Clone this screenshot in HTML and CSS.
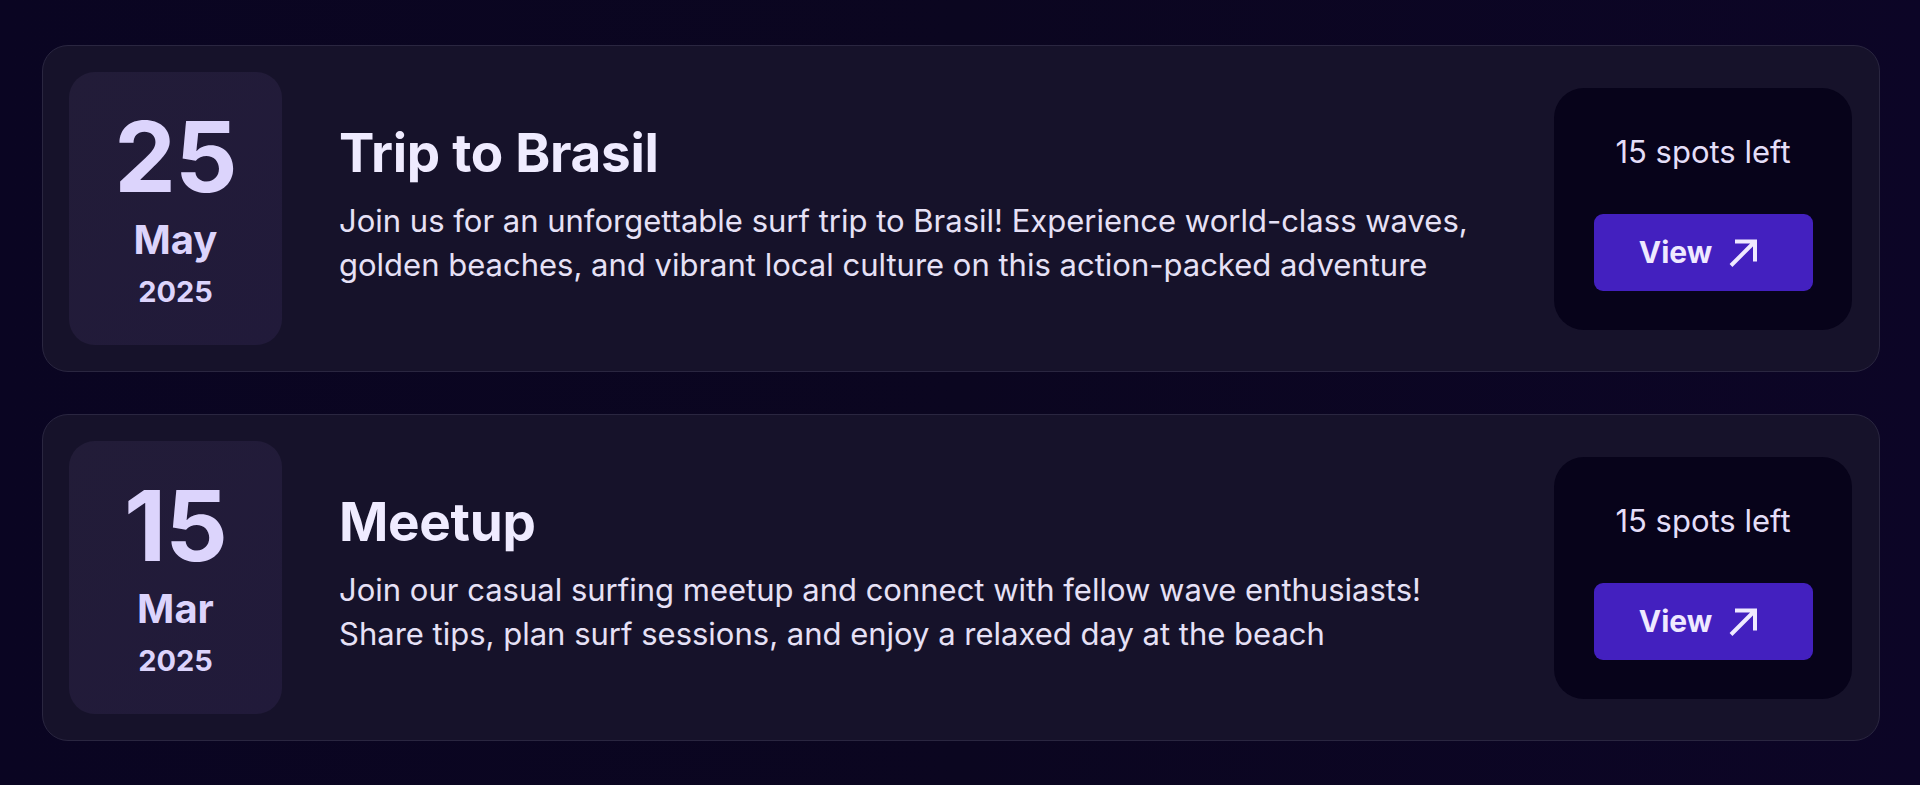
FILE: index.html
```html
<!DOCTYPE html>
<html lang="en">
<head>
<meta charset="utf-8">
<title>Events</title>
<link rel="stylesheet" href="styles.css">
</head>
<body>
<main class="events">
  <article class="event-card">
    <div class="date-box">
      <div class="date-day">25</div>
      <div class="date-month">May</div>
      <div class="date-year">2025</div>
    </div>
    <div class="event-info">
      <h2 class="event-title">Trip to Brasil</h2>
      <p class="event-desc">Join us for an unforgettable surf trip to Brasil! Experience world-class waves,<br>golden beaches, and vibrant local culture on this action-packed adventure</p>
    </div>
    <div class="event-action">
      <div class="spots">15 spots left</div>
      <a class="view-btn" href="#">View
        <svg class="arrow" viewBox="0 0 31 31" width="31" height="31" aria-hidden="true"><path d="M3 28.5 L27 4.5 M7 4.5 H27 V24.5" fill="none" stroke="currentColor" stroke-width="4"/></svg>
      </a>
    </div>
  </article>
  <article class="event-card">
    <div class="date-box">
      <div class="date-day">15</div>
      <div class="date-month">Mar</div>
      <div class="date-year">2025</div>
    </div>
    <div class="event-info">
      <h2 class="event-title">Meetup</h2>
      <p class="event-desc">Join our casual surfing meetup and connect with fellow wave enthusiasts!<br>Share tips, plan surf sessions, and enjoy a relaxed day at the beach</p>
    </div>
    <div class="event-action">
      <div class="spots">15 spots left</div>
      <a class="view-btn" href="#">View
        <svg class="arrow" viewBox="0 0 31 31" width="31" height="31" aria-hidden="true"><path d="M3 28.5 L27 4.5 M7 4.5 H27 V24.5" fill="none" stroke="currentColor" stroke-width="4"/></svg>
      </a>
    </div>
  </article>
</main>
</body>
</html>
```
FILE: styles.css
```css
* { box-sizing: border-box; }
html, body { margin: 0; height: 100%; }
body {
  background: linear-gradient(90deg, #0a0522 0%, #0b0620 50%, #0c0526 100%);
  font-family: Inter, "Noto Sans", sans-serif;
  color: #ece8fb;
}
.events {
  display: flex;
  flex-direction: column;
  gap: 42px;
  padding: 45px 40px 0 42px;
}
.event-card {
  display: flex;
  align-items: center;
  padding: 26px;
  border: 1px solid #2a2640;
  border-radius: 26px;
  background: #16122a;
}
.date-box {
  flex: 0 0 213px;
  height: 273px;
  padding-top: 5px;
  border-radius: 26px;
  background: linear-gradient(135deg, #221c38 0%, #211a3a 100%);
  display: flex;
  flex-direction: column;
  align-items: center;
  justify-content: center;
  color: #dcd4fc;
  font-weight: 700;
}
.date-day { font-size: 98px; line-height: 1; letter-spacing: -1px; margin-top: -4px; }
.date-month { font-size: 40px; line-height: 1.2; margin-top: 10px; }
.date-year { font-size: 29px; line-height: 1.2; margin-top: 11px; }
.event-info {
  flex: 1;
  padding-left: 57px;
  padding-bottom: 8px;
}
.event-title {
  margin: 0;
  font-size: 53px;
  font-weight: 700;
  line-height: 1.2;
  color: #efebff;
  letter-spacing: -0.3px;
}
.event-desc {
  margin: 13px 0 0;
  font-size: 31px;
  line-height: 44px;
  color: #e6e1f6;
}
.event-action {
  flex: 0 0 298px;
  height: 242px;
  padding-top: 7px;
  margin-right: 1px;
  border-radius: 30px;
  background: #07031a;
  display: flex;
  flex-direction: column;
  align-items: center;
  justify-content: center;
  gap: 43px;
}
.spots {
  font-size: 31px;
  line-height: 1.2;
  color: #e4def8;
}
.view-btn {
  width: 219px;
  height: 77px;
  padding-right: 8px;
  border-radius: 9px;
  background: #4320bf;
  color: #efe9ff;
  text-decoration: none;
  font-size: 30px;
  font-weight: 700;
  display: flex;
  align-items: center;
  justify-content: center;
  gap: 16px;
}
.arrow { display: block; }
```
